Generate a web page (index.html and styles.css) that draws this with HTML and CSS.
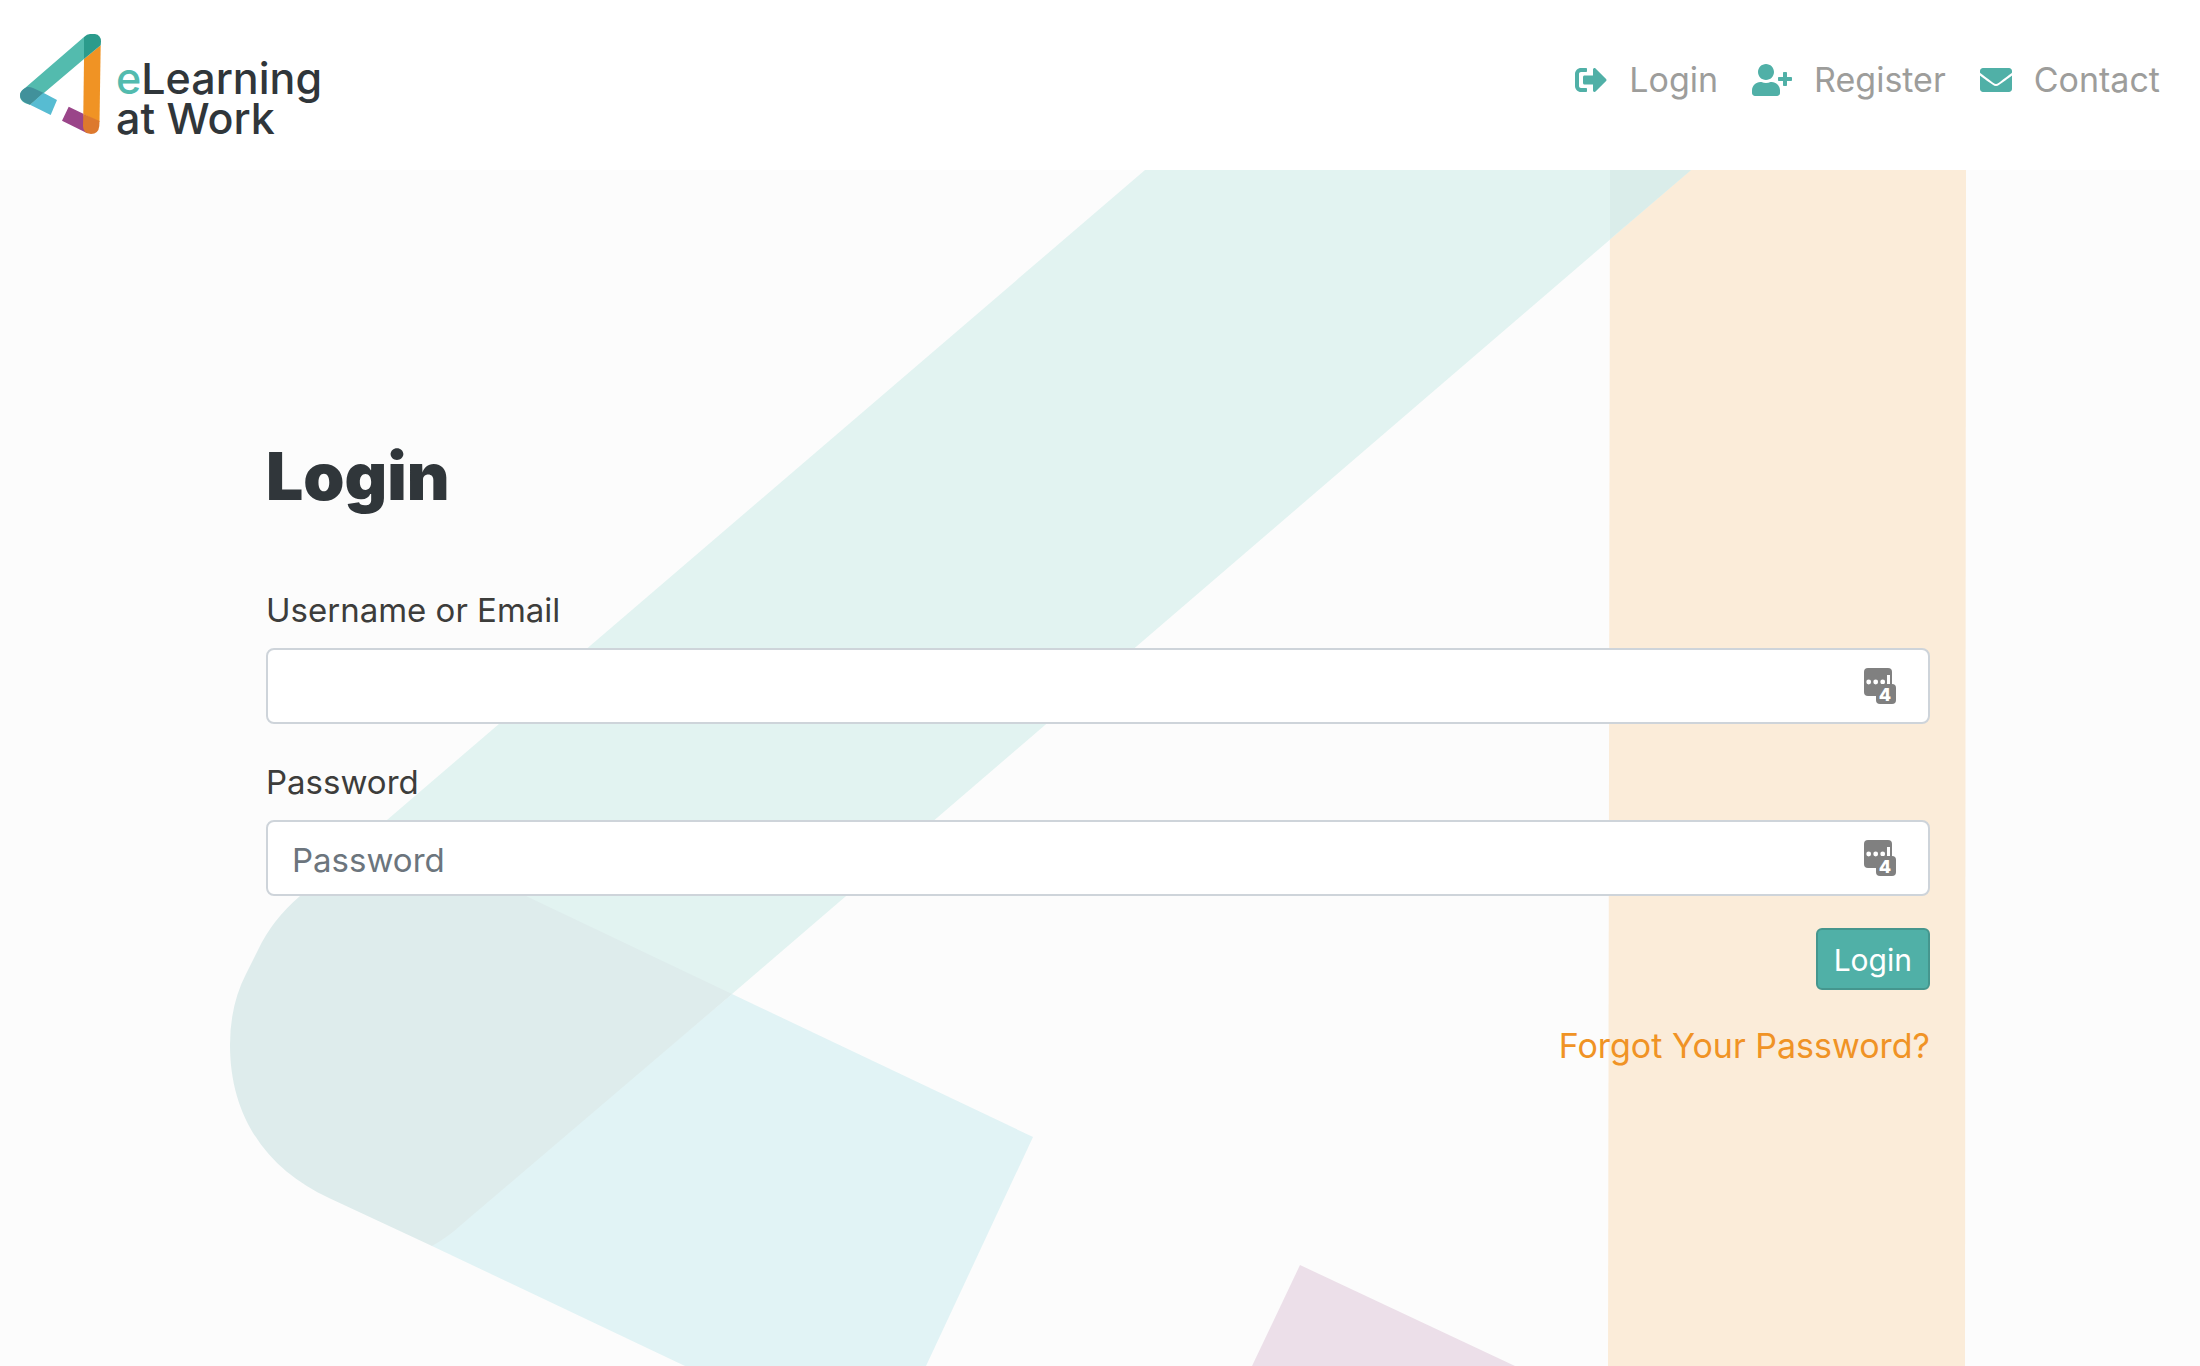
FILE: index.html
```html
<!DOCTYPE html>
<html lang="en">
<head>
  <meta charset="UTF-8">
  <meta name="viewport" content="width=device-width, initial-scale=1.0">
  <title>Login - eLearning at Work</title>
  <link rel="stylesheet" href="styles.css">
</head>
<body>
  <header class="navbar">
    <a class="brand" href="#">
      <svg class="brand-mark" viewBox="0 0 82 100" aria-hidden="true">
        <path fill="#53bbae" d="M5 54 L64 3 L64 25 L10 70.7 C3 69 0 66 0 62 C0 58 2 56 5 54z"/>
        <path fill="#57bcd2" d="M10 70.7 L23.3 58.7 L37 66 L30.7 81z"/>
        <path fill="#41919b" d="M7 53 Q10 52.500 13 54 L23.300 58.700 L10 70.700 L5 68.500 Q0 66 0 61 Q0.500 56 7 53z"/>
        <path fill="#9a4589" d="M48.700 72.700 L42 86.700 L67.300 99.300 L63.300 79.700z"/>
        <path fill="#f09324" d="M64 25 L80.700 11.300 L79.500 88 L63.300 80z"/>
        <path fill="#dd792e" d="M63.300 79.700 L79.500 87 L79.300 92 Q78.500 100 71 100 Q63 99.500 63 92z"/>
        <path fill="#2b9b8c" d="M64 3 Q67 0 70 0 L75 0 Q81 1 81 7.500 L80.700 11.300 L64 25z"/>
      </svg>
      <span class="brand-name"><span class="brand-e">e</span>Learning<br>at Work</span>
    </a>
    <nav class="nav-links">
      <a href="#">
        <svg class="icon" viewBox="0 0 512 512" aria-hidden="true"><path d="M497 273L329 441c-15 15-41 4.500-41-17v-96H152c-13.300 0-24-10.700-24-24v-96c0-13.300 10.700-24 24-24h136V88c0-21.400 25.900-32 41-17l168 168c9.300 9.400 9.300 24.600 0 34zM192 436v-40c0-6.600-5.400-12-12-12H96c-17.700 0-32-14.300-32-32V160c0-17.700 14.300-32 32-32h84c6.600 0 12-5.400 12-12V76c0-6.600-5.400-12-12-12H96c-53 0-96 43-96 96v192c0 53 43 96 96 96h84c6.600 0 12-5.400 12-12z"/></svg>
        Login
      </a>
      <a href="#">
        <svg class="icon icon-wide" viewBox="0 0 640 512" aria-hidden="true"><path d="M624 208h-64v-64c0-8.800-7.200-16-16-16h-32c-8.800 0-16 7.200-16 16v64h-64c-8.800 0-16 7.200-16 16v32c0 8.800 7.200 16 16 16h64v64c0 8.800 7.200 16 16 16h32c8.800 0 16-7.200 16-16v-64h64c8.800 0 16-7.200 16-16v-32c0-8.800-7.200-16-16-16zm-400 48c70.700 0 128-57.300 128-128S294.700 0 224 0 96 57.300 96 128s57.300 128 128 128zm89.600 32h-16.700c-22.200 10.200-46.900 16-72.900 16s-50.600-5.800-72.900-16h-16.700C60.200 288 0 348.200 0 422.400V464c0 26.500 21.500 48 48 48h352c26.500 0 48-21.500 48-48v-41.600c0-74.200-60.200-134.400-134.400-134.400z"/></svg>
        Register
      </a>
      <a href="#">
        <svg class="icon" viewBox="0 0 512 512" aria-hidden="true"><path d="M502.300 190.800c3.900-3.100 9.700-.2 9.700 4.700V400c0 26.500-21.500 48-48 48H48c-26.500 0-48-21.500-48-48V195.600c0-5 5.700-7.800 9.700-4.700 22.400 17.400 52.100 39.500 154.100 113.600 21.100 15.400 56.700 47.800 92.200 47.600 35.700.3 72-32.800 92.300-47.600 102-74.100 131.600-96.300 154-113.700zM256 320c23.200.4 56.600-29.200 73.400-41.400 132.700-96.300 142.800-104.700 173.400-128.700 5.800-4.500 9.200-11.500 9.200-18.900v-19c0-26.500-21.500-48-48-48H48c-26.500 0-48 21.500-48 48v19c0 7.400 3.400 14.300 9.200 18.900 30.600 23.900 40.700 32.400 173.400 128.700 16.800 12.200 50.200 41.800 73.400 41.400z"/></svg>
        Contact
      </a>
    </nav>
  </header>

  <main class="page">
    <svg class="page-bg" viewBox="0 0 2200 1196" preserveAspectRatio="xMidYMin slice" aria-hidden="true">
      <path fill="#fbecd9" d="M1610 0 H1966 L1965 1196 H1608z"/>
      <path fill="#e2f3f1" d="M1145 0 H1691 L732 824 L432 1076 L300 726 Q330 690 387 650z"/>
      <path fill="#daedea" d="M1610 0 H1691 L1610 69z"/>
      <path fill="#e1f3f5" d="M732 824 L1033 967 L926 1196 H685 L432 1076z"/>
      <path fill="#deecec" d="M300 726 Q370 655 450 690 L526 726 L732 824 L461 1055 Q448 1067 432 1076 L329 1028 C270 1001 230 950 230 875 Q230 835 246 804 L258 780 Q272 750 300 726z"/>
      <path fill="#ecdfe9" d="M1300 1095 L1515 1196 H1252z"/>
    </svg>

    <form class="login-form">
      <h1>Login</h1>

      <label for="username">Username or Email</label>
      <div class="field">
        <input type="text" id="username">
        <svg class="field-icon" viewBox="0 0 32 36" aria-hidden="true">
          <rect width="28" height="28" rx="4"/>
          <g fill="#fff"><circle cx="4.700" cy="14" r="2.400"/><circle cx="11.700" cy="14" r="2.400"/><circle cx="18.700" cy="14" r="2.400"/><rect x="23" y="7" width="3" height="10"/></g>
          <rect x="12" y="16" width="20" height="20" rx="4"/>
          <text x="21" y="33">4</text>
        </svg>
      </div>

      <label for="password">Password</label>
      <div class="field">
        <input type="password" id="password" placeholder="Password">
        <svg class="field-icon" viewBox="0 0 32 36" aria-hidden="true">
          <rect width="28" height="28" rx="4"/>
          <g fill="#fff"><circle cx="4.700" cy="14" r="2.400"/><circle cx="11.700" cy="14" r="2.400"/><circle cx="18.700" cy="14" r="2.400"/><rect x="23" y="7" width="3" height="10"/></g>
          <rect x="12" y="16" width="20" height="20" rx="4"/>
          <text x="21" y="33">4</text>
        </svg>
      </div>

      <div class="actions">
        <button type="submit">Login</button>
        <a href="#">Forgot Your Password?</a>
      </div>
    </form>
  </main>
</body>
</html>
```
FILE: styles.css
```css
* {
  box-sizing: border-box;
}
body {
  margin: 0;
  min-height: 100vh;
  display: flex;
  flex-direction: column;
  font-family: Inter, "Open Sans", sans-serif;
  font-size: 33px;
  line-height: 48px;
  color: #3d3d3b;
  background: #fcfcfc;
}
a {
  text-decoration: none;
}

/* header */
.navbar {
  display: flex;
  justify-content: space-between;
  align-items: flex-start;
  padding: 34px 40px 32px 20px;
  background: #fff;
}
.brand {
  display: flex;
  gap: 14px;
  color: #30363a;
}
.brand-mark {
  width: 82px;
  height: 100px;
}
.brand-name {
  padding-top: 24px;
  font-size: 43px;
  font-weight: 500;
  line-height: 40px;
}
.brand-e {
  color: #53bbae;
}
.nav-links {
  display: flex;
  gap: 34px;
  padding-top: 22px;
  font-size: 34px;
}
.nav-links a {
  display: flex;
  align-items: center;
  gap: 22px;
  color: #9d9d9b;
}
.icon {
  width: 32px;
  height: 32px;
  fill: #50b0a7;
}
.icon-wide {
  width: 40px;
}

/* login page */
.page {
  position: relative;
  flex: 1;
  padding: 268px 270px 64px 266px;
  overflow: hidden;
}
.page-bg {
  position: absolute;
  top: 0;
  left: 0;
  width: 100%;
  height: 100%;
}
.login-form {
  position: relative;
}
h1 {
  margin: 0 0 70px;
  font-size: 66px;
  font-weight: 900;
  line-height: 76px;
  color: #30363a;
}
label {
  display: block;
  padding-top: 2px;
  margin-bottom: 14px;
}
.field {
  position: relative;
  margin-bottom: 32px;
}
input {
  display: block;
  width: 100%;
  height: 76px;
  padding: 4px 80px 0 24px;
  font: inherit;
  color: #495057;
  background: #fff;
  border: 2px solid #ced4da;
  border-radius: 8px;
}
input::placeholder {
  color: #6c757d;
  opacity: 1;
}
.field-icon {
  position: absolute;
  top: 20px;
  right: 34px;
  width: 32px;
  height: 36px;
  fill: #808080;
}
.field-icon text {
  fill: #fff;
  font-size: 18px;
  font-weight: 800;
  text-anchor: middle;
}
.actions {
  display: flex;
  flex-direction: column;
  align-items: flex-end;
  gap: 32px;
}
button {
  height: 62px;
  padding: 2px 16px 0;
  font: inherit;
  font-size: 30px;
  color: #fff;
  background: #50b0a7;
  border: 2px solid #45968e;
  border-radius: 6px;
  cursor: pointer;
}
button:hover {
  background: #45968e;
}
.actions a {
  font-size: 34px;
  color: #f09325;
}
```
